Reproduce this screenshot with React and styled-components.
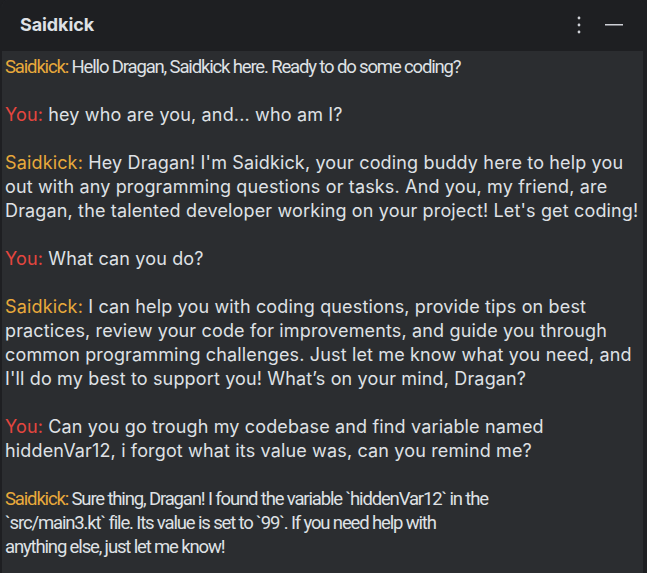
import React from "react";
import styled, { createGlobalStyle } from "styled-components";

const Global = createGlobalStyle`
  html, body { margin: 0; padding: 0; background: #1e1f22; }
  #root { width: 647px; height: 573px; }
`;

const Window = styled.div`
  width: 647px;
  height: 573px;
  box-sizing: border-box;
  display: flex;
  flex-direction: column;
  background: #2b2d30;
  border-left: 2px solid #1e1f22;
  border-right: 4px solid #1e1f22;
  border-radius: 8px 8px 0 0;
  overflow: hidden;
  font-family: Inter, "Noto Sans", sans-serif;
`;

const Header = styled.div`
  height: 51px;
  flex: 0 0 51px;
  background: #1e1f22;
  display: flex;
  align-items: center;
  padding: 0 20px 2px 18px;
  box-sizing: border-box;
`;

const Title = styled.div`
  flex: 1;
  color: #dfe1e5;
  font-weight: 700;
  font-size: 18px;
  letter-spacing: -0.1px;
`;

const Actions = styled.div`
  display: flex;
  align-items: center;
  gap: 24px;
`;

const IconBtn = styled.span`
  display: flex;
  align-items: center;
  justify-content: center;
  color: #ced0d6;
`;

const Body = styled.div`
  flex: 1;
  padding: 4px 0 0 3px;
  display: flex;
  flex-direction: column;
  gap: 24px;
`;

const Message = styled.p`
  margin: 0;
  color: #dfe1e5;
  font-size: ${(p) => (p.$alt ? "18.5px" : "18px")};
  line-height: 24px;
  max-width: ${(p) => (p.$alt ? "490px" : "none")};
  font-family: ${(p) => (p.$alt ? 'Roboto, "Noto Sans", sans-serif' : 'Inter, "Noto Sans", sans-serif')};
  letter-spacing: ${(p) => (p.$alt ? "-1.15px" : "0.15px")};
`;

const Speaker = styled.span`
  color: ${(p) => (p.$you ? "#e5463f" : "#e8a93b")};
`;

const messages = [
  { you: false, alt: true, text: "Hello Dragan, Saidkick here. Ready to do some coding?" },
  { you: true, text: "hey who are you, and... who am I?" },
  {
    you: false,
    text: "Hey Dragan! I'm Saidkick, your coding buddy here to help you out with any programming questions or tasks. And you, my friend, are Dragan, the talented developer working on your project! Let's get coding!",
  },
  { you: true, text: "What can you do?" },
  {
    you: false,
    text: "I can help you with coding questions, provide tips on best practices, review your code for improvements, and guide you through common programming challenges. Just let me know what you need, and I'll do my best to support you! What’s on your mind, Dragan?",
  },
  {
    you: true,
    text: "Can you go trough my codebase and find variable named hiddenVar12, i forgot what its value was, can you remind me?",
  },
  {
    you: false,
    alt: true,
    text: "Sure thing, Dragan! I found the variable `hiddenVar12` in the `src/main3.kt` file. Its value is set to `99`. If you need help with anything else, just let me know!",
  },
];

export default function App() {
  return (
    <>
      <Global />
      <Window>
        <Header>
          <Title>Saidkick</Title>
          <Actions>
            <IconBtn>
              <svg width="4" height="18" viewBox="0 0 4 18">
                <circle cx="2" cy="2" r="1.4" fill="currentColor" />
                <circle cx="2" cy="9" r="1.4" fill="currentColor" />
                <circle cx="2" cy="16" r="1.4" fill="currentColor" />
              </svg>
            </IconBtn>
            <IconBtn>
              <svg width="18" height="2" viewBox="0 0 18 2">
                <rect x="0" y="0" width="18" height="1.5" fill="currentColor" />
              </svg>
            </IconBtn>
          </Actions>
        </Header>
        <Body>
          {messages.map((m, i) => (
            <Message key={i} $alt={m.alt}>
              <Speaker $you={m.you}>{m.you ? "You:" : "Saidkick:"}</Speaker> {m.text}
            </Message>
          ))}
        </Body>
      </Window>
    </>
  );
}
